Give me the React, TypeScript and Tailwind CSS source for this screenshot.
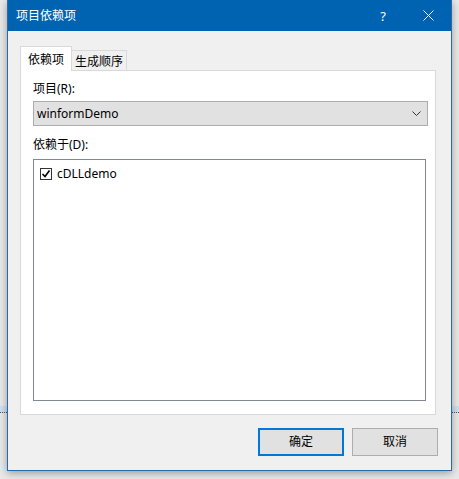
import React from "react";

const FONT = {
  fontFamily: '"Segoe UI", "Noto Sans", "Noto Sans CJK SC", sans-serif',
};

export default function App() {
  return (
    <div
      className="relative w-[459px] h-[479px] bg-[#e9e9e9] overflow-hidden text-[12px] leading-[16px] text-black"
      style={FONT}
    >
      {/* desktop behind the dialog */}
      <div className="absolute left-0 top-[406px] w-full h-[7px] bg-[#cfe0f1] border-b border-dotted border-[#555]" />

      <div className="relative ml-[7px] w-[445px] h-[471px] bg-[#f0f0f0] border-x border-b border-[#2a6aa8] shadow-[0_2px_8px_rgba(0,0,0,0.35)] flex flex-col">
        {/* title bar */}
        <div className="h-[31px] bg-[#0063b1] flex items-center text-white shrink-0">
          <div className="pl-[8px] flex-1">项目依赖项</div>
          <div className="w-[44px] h-full flex items-center justify-center text-[13px]">?</div>
          <div className="w-[46px] h-full flex items-center justify-center">
            <svg width="11" height="11" viewBox="0 0 11 11">
              <path d="M0.5 0.5 L10.5 10.5 M10.5 0.5 L0.5 10.5" stroke="white" strokeWidth="1" />
            </svg>
          </div>
        </div>

        {/* body */}
        <div className="flex flex-col pl-[12px] pr-[15px] pt-[15px]">
          {/* tab headers */}
          <div className="flex items-end h-[24px]">
            <div className="relative z-10 h-[25px] -mb-px w-[52px] bg-white border-x border-t border-[#d9d9d9] flex items-center justify-center pt-[1px]">
              依赖项
            </div>
            <div className="h-[20px] w-[56px] -ml-px bg-[#f0f0f0] border border-b-0 border-[#d9d9d9] flex items-center justify-center pt-[2px]">
              生成顺序
            </div>
          </div>

          {/* tab panel */}
          <div className="w-[416px] h-[345px] bg-white border border-[#d9d9d9] pl-[12px] pt-[10px] flex flex-col">
            <div>项目(R):</div>
            <div className="mt-[4px] w-[395px] h-[25px] bg-[#e1e1e1] border border-[#adadad] flex items-center pl-[3px] pr-[6px]">
              <span className="flex-1">winformDemo</span>
              <svg width="9" height="5" viewBox="0 0 9 5">
                <path d="M0.5 0.5 L4.5 4.5 L8.5 0.5" stroke="#333" strokeWidth="1" fill="none" />
              </svg>
            </div>
            <div className="mt-[11px]">依赖于(D):</div>
            <div className="mt-[6px] w-[393px] h-[242px] border border-[#828790] bg-white pl-[6px] pt-[6px]">
              <div className="flex items-center">
                <div className="w-[12px] h-[12px] border border-[#333] bg-white flex items-center justify-center">
                  <svg width="10" height="10" viewBox="0 0 10 10">
                    <path d="M1.5 5 L4 7.5 L8.5 1.5" stroke="#000" strokeWidth="1.6" fill="none" />
                  </svg>
                </div>
                <span className="ml-[5px]">cDLLdemo</span>
              </div>
            </div>
          </div>

          {/* buttons */}
          <div className="mt-[13px] flex justify-end gap-[8px] pr-[-2px] mr-[-2px]">
            <div className="w-[86px] h-[28px] bg-[#e1e1e1] border-2 border-[#0078d7] flex items-center justify-center">
              确定
            </div>
            <div className="w-[86px] h-[28px] bg-[#e1e1e1] border border-[#adadad] flex items-center justify-center">
              取消
            </div>
          </div>
        </div>
      </div>
    </div>
  );
}
